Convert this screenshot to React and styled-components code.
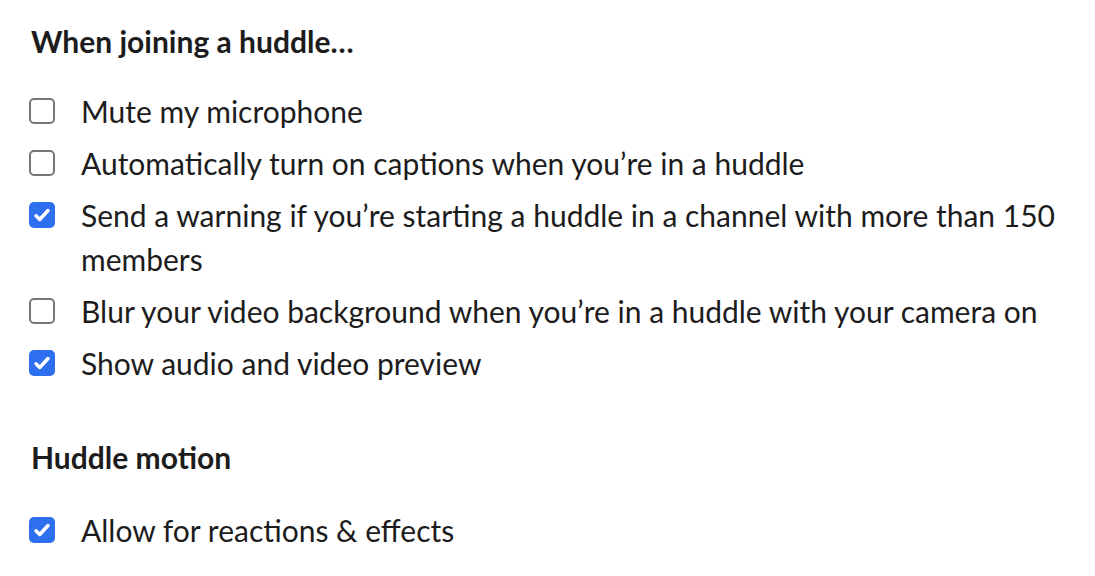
import React from 'react'
import styled, { createGlobalStyle } from 'styled-components'

const GlobalStyle = createGlobalStyle`
  body {
    margin: 0;
    background: #ffffff;
    font-family: Lato, "Noto Sans", sans-serif;
    color: #1d1c1d;
  }
`

const Page = styled.div`
  padding: 19px 29px 0 29px;
`

const Section = styled.section`
  display: flex;
  flex-direction: column;
  & + & {
    margin-top: 50px;
  }
`

const Heading = styled.h2`
  margin: 0 0 ${p => p.$after || 26}px 2px;
  font-size: 30px;
  font-weight: 700;
  line-height: 44px;
  color: #1d1c1d;
`

const List = styled.div`
  display: flex;
  flex-direction: column;
  gap: 8px;
`

const Row = styled.label`
  display: flex;
  align-items: flex-start;
  gap: 26px;
  font-size: 30px;
  line-height: 44px;
  color: #1d1c1d;
  cursor: pointer;
`

const Box = styled.span`
  flex: none;
  width: 26px;
  height: 26px;
  margin-top: 9px;
  box-sizing: border-box;
  border-radius: 5px;
  border: ${p => (p.$checked ? 'none' : '2px solid #777777')};
  background: ${p => (p.$checked ? '#2e6ff0' : '#ffffff')};
  display: flex;
  align-items: center;
  justify-content: center;
`

function Check({ checked, children }) {
  return (
    <Row>
      <Box $checked={checked}>
        {checked && (
          <svg width="20" height="20" viewBox="0 0 16 16" fill="none">
            <path d="M3.2 8.6l3 3L12.8 4.4" stroke="#fff" strokeWidth="2.8" strokeLinecap="round" strokeLinejoin="round" />
          </svg>
        )}
      </Box>
      <span>{children}</span>
    </Row>
  )
}

const App = () => (
  <Page>
    <GlobalStyle />
    <Section>
      <Heading>When joining a huddle…</Heading>
      <List>
        <Check>Mute my microphone</Check>
        <Check>Automatically turn on captions when you’re in a huddle</Check>
        <Check checked>Send a warning if you’re starting a huddle in a channel with more than 150 members</Check>
        <Check>Blur your video background when you’re in a huddle with your camera on</Check>
        <Check checked>Show audio and video preview</Check>
      </List>
    </Section>
    <Section>
      <Heading $after={29}>Huddle motion</Heading>
      <List>
        <Check checked>Allow for reactions &amp; effects</Check>
      </List>
    </Section>
  </Page>
)

export default App
